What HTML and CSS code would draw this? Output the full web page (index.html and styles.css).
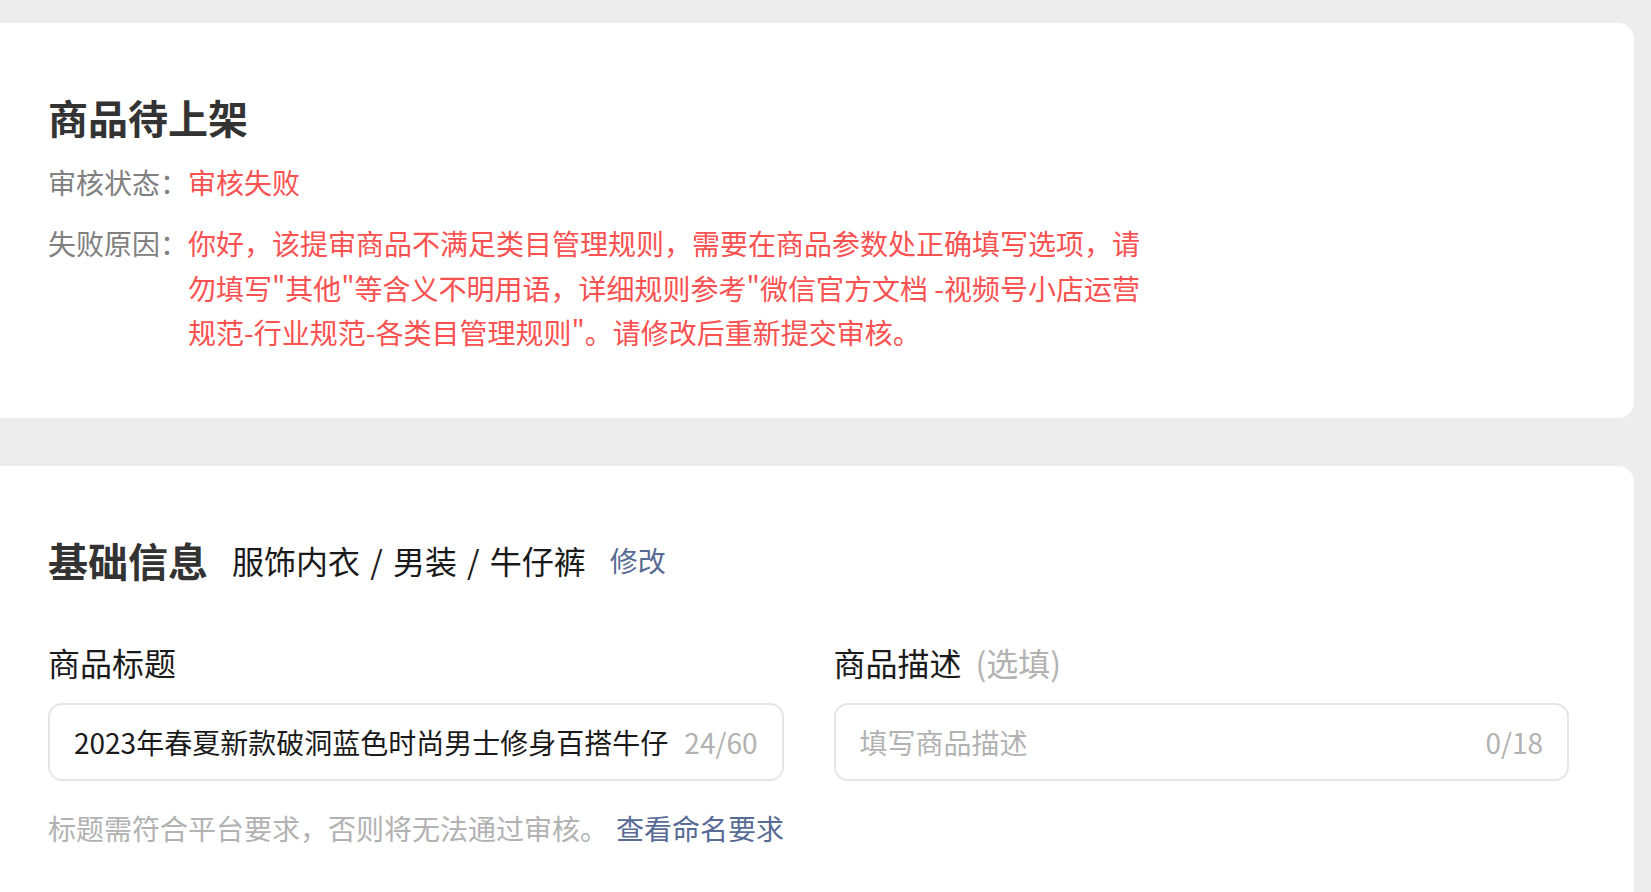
FILE: index.html
```html
<!DOCTYPE html>
<html lang="zh-CN">
<head>
    <meta charset="UTF-8">
    <meta name="viewport" content="width=device-width, initial-scale=1.0">
    <title>商品待上架</title>
    <link rel="stylesheet" href="styles.css">
</head>
<body>
    <div class="page">
        <div class="card status-card">
            <h1 class="card-title">商品待上架</h1>
            <div class="info-row">
                <span class="info-label">审核状态：</span>
                <span class="info-value">审核失败</span>
            </div>
            <div class="info-row reason-row">
                <span class="info-label">失败原因：</span>
                <span class="info-value">你好，该提审商品不满足类目管理规则，需要在商品参数处正确填写选项，请<br>勿填写"其他"等含义不明用语，详细规则参考"微信官方文档 -视频号小店运营<br>规范-行业规范-各类目管理规则"。请修改后重新提交审核。</span>
            </div>
        </div>

        <div class="card basic-card">
            <div class="section-head">
                <h2 class="card-title">基础信息</h2>
                <span class="category">服饰内衣 / 男装 / 牛仔裤</span>
                <a class="link edit-link" href="#">修改</a>
            </div>

            <div class="form-grid">
                <div class="form-item">
                    <div class="field-label">商品标题</div>
                    <div class="field-box">
                        <div class="field-text">2023年春夏新款破洞蓝色时尚男士修身百搭牛仔裤</div>
                        <span class="field-count">24/60</span>
                    </div>
                    <div class="field-hint">标题需符合平台要求，否则将无法通过审核。<a class="link hint-link" href="#">查看命名要求</a></div>
                </div>
                <div class="form-item">
                    <div class="field-label">商品描述<span class="optional">(选填)</span></div>
                    <div class="field-box">
                        <div class="field-text placeholder">填写商品描述</div>
                        <span class="field-count">0/18</span>
                    </div>
                </div>
            </div>
        </div>
    </div>
</body>
</html>
```

FILE: styles.css
```css
body {
    margin: 0;
    background-color: #ededed;
    font-family: "Noto Sans CJK SC", "Noto Sans", sans-serif;
    color: #1a1a1a;
    overflow: hidden;
}

.page {
    padding: 23px 17px 0 0;
}

.card {
    background-color: #fff;
    border-radius: 16px;
    margin-left: -24px;
    padding: 64px 65px 63px 72px;
}

.basic-card {
    margin-top: 48px;
}

.card-title {
    margin: 0;
    font-size: 40px;
    line-height: 60px;
    font-weight: bold;
    color: #333;
}

/* 审核信息 */
.info-row {
    display: flex;
    margin-top: 13px;
    font-size: 28px;
    line-height: 44.8px;
}

.reason-row {
    margin-top: 16px;
}

.info-label {
    color: #808080;
    flex-shrink: 0;
    width: 140px;
}

.info-value {
    color: #fa5151;
}

/* 基础信息 */
.section-head {
    display: flex;
    align-items: center;
}

.category {
    font-size: 32px;
    margin-left: 24px;
    color: #1a1a1a;
    word-spacing: 3px;
}

.link {
    color: #576b95;
    text-decoration: none;
}

.edit-link {
    font-size: 28px;
    margin-left: 24px;
}

.form-grid {
    display: grid;
    grid-template-columns: minmax(0, 1fr) minmax(0, 1fr);
    column-gap: 50px;
    margin-top: 50px;
}

.form-item {
    min-width: 0;
}

.field-label {
    font-size: 32px;
    line-height: 44.8px;
    color: #1a1a1a;
}

.optional {
    color: #b2b2b2;
    margin-left: 14px;
}

.field-box {
    display: flex;
    align-items: center;
    height: 78px;
    box-sizing: border-box;
    margin-top: 18px;
    padding: 0 24px;
    border: 2px solid #e6e6e6;
    border-radius: 14px;
    font-size: 28px;
}

/* 超出一行的文字换到隐藏的第二行 */
.field-text {
    flex: 1;
    min-width: 0;
    height: 40px;
    line-height: 40px;
    word-break: break-all;
    overflow: hidden;
}

.placeholder {
    color: #b2b2b2;
}

.field-count {
    color: #b2b2b2;
    margin-left: 12px;
    flex-shrink: 0;
}

.field-hint {
    margin-top: 25px;
    font-size: 28px;
    line-height: 44px;
    color: #b2b2b2;
    white-space: nowrap;
}

.hint-link {
    margin-left: 8px;
}
```
